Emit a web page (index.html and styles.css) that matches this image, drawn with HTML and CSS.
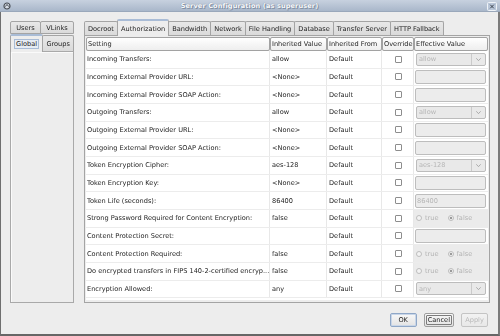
FILE: index.html
```html
<!DOCTYPE html>
<html>
<head>
<meta charset="utf-8">
<link rel="stylesheet" href="styles.css">
</head>
<body>
<div class="window">
  <div class="titlebar">
    <span class="app-icon">
      <svg width="8" height="8" viewBox="0 0 8 8"><circle cx="4" cy="4" r="3" fill="#d7dde6" stroke="#4a4f57" stroke-width="1.2"/><path d="M2.3 4.6 L4 2.4 L5.7 4.6" fill="none" stroke="#4a4f57" stroke-width="1"/></svg>
    </span>
    <span class="title">Server Configuration (as superuser)</span>
    <span class="close">
      <svg width="10" height="9" viewBox="0 0 10 9"><rect x="0.5" y="0.5" width="9" height="8" rx="1" fill="#b9c6d8" stroke="#eef2f7"/><path d="M3.2 2.7 L6.8 6.3 M6.8 2.7 L3.2 6.3" stroke="#3c4450" stroke-width="1"/></svg>
    </span>
  </div>
  <div class="frame">
    <div class="main">
      <div class="left-pane">
        <div class="ltab-row first">
          <div class="tab"><span class="label">Users</span></div>
          <div class="tab"><span class="label">VLinks</span></div>
        </div>
        <div class="ltab-row second">
          <div class="tab selected"><span class="focus label">Global</span></div>
          <div class="tab"><span class="label">Groups</span></div>
        </div>
        <div class="left-content"></div>
      </div>
      <div class="right-pane">
        <div class="rtabs">
          <div class="tab"><span class="label">Docroot</span></div>
          <div class="tab selected"><span class="label">Authorization</span></div>
          <div class="tab"><span class="label">Bandwidth</span></div>
          <div class="tab"><span class="label">Network</span></div>
          <div class="tab"><span class="label">File Handling</span></div>
          <div class="tab"><span class="label">Database</span></div>
          <div class="tab"><span class="label">Transfer Server</span></div>
          <div class="tab"><span class="label">HTTP Fallback</span></div>
        </div>
        <div class="content">
          <div class="thead">
            <div class="th">Setting</div>
            <div class="th">Inherited Value</div>
            <div class="th">Inherited From</div>
            <div class="th">Override</div>
            <div class="th">Effective Value</div>
          </div>
          <div class="tbody">
            <div class="row">
              <div class="cell c-set">Incoming Transfers:</div>
              <div class="cell c-iv">allow</div>
              <div class="cell c-if">Default</div>
              <div class="cell c-ov"><span class="check"></span></div>
              <div class="cell c-ev"><div class="combo"><span class="combo-text">allow</span><span class="combo-arrow"><svg width="5" height="3" viewBox="0 0 5 3"><path d="M0.3 0.3 L2.5 2.6 L4.7 0.3" fill="none" stroke="#9a9a9a" stroke-width="0.8"/></svg></span></div></div>
            </div>
            <div class="row">
              <div class="cell c-set">Incoming External Provider URL:</div>
              <div class="cell c-iv">&lt;None&gt;</div>
              <div class="cell c-if">Default</div>
              <div class="cell c-ov"><span class="check"></span></div>
              <div class="cell c-ev"><div class="field"></div></div>
            </div>
            <div class="row">
              <div class="cell c-set">Incoming External Provider SOAP Action:</div>
              <div class="cell c-iv">&lt;None&gt;</div>
              <div class="cell c-if">Default</div>
              <div class="cell c-ov"><span class="check"></span></div>
              <div class="cell c-ev"><div class="field"></div></div>
            </div>
            <div class="row">
              <div class="cell c-set">Outgoing Transfers:</div>
              <div class="cell c-iv">allow</div>
              <div class="cell c-if">Default</div>
              <div class="cell c-ov"><span class="check"></span></div>
              <div class="cell c-ev"><div class="combo"><span class="combo-text">allow</span><span class="combo-arrow"><svg width="5" height="3" viewBox="0 0 5 3"><path d="M0.3 0.3 L2.5 2.6 L4.7 0.3" fill="none" stroke="#9a9a9a" stroke-width="0.8"/></svg></span></div></div>
            </div>
            <div class="row">
              <div class="cell c-set">Outgoing External Provider URL:</div>
              <div class="cell c-iv">&lt;None&gt;</div>
              <div class="cell c-if">Default</div>
              <div class="cell c-ov"><span class="check"></span></div>
              <div class="cell c-ev"><div class="field"></div></div>
            </div>
            <div class="row">
              <div class="cell c-set">Outgoing External Provider SOAP Action:</div>
              <div class="cell c-iv">&lt;None&gt;</div>
              <div class="cell c-if">Default</div>
              <div class="cell c-ov"><span class="check"></span></div>
              <div class="cell c-ev"><div class="field"></div></div>
            </div>
            <div class="row">
              <div class="cell c-set">Token Encryption Cipher:</div>
              <div class="cell c-iv">aes-128</div>
              <div class="cell c-if">Default</div>
              <div class="cell c-ov"><span class="check"></span></div>
              <div class="cell c-ev"><div class="combo"><span class="combo-text">aes-128</span><span class="combo-arrow"><svg width="5" height="3" viewBox="0 0 5 3"><path d="M0.3 0.3 L2.5 2.6 L4.7 0.3" fill="none" stroke="#9a9a9a" stroke-width="0.8"/></svg></span></div></div>
            </div>
            <div class="row">
              <div class="cell c-set">Token Encryption Key:</div>
              <div class="cell c-iv">&lt;None&gt;</div>
              <div class="cell c-if">Default</div>
              <div class="cell c-ov"><span class="check"></span></div>
              <div class="cell c-ev"><div class="field"></div></div>
            </div>
            <div class="row">
              <div class="cell c-set">Token Life (seconds):</div>
              <div class="cell c-iv">86400</div>
              <div class="cell c-if">Default</div>
              <div class="cell c-ov"><span class="check"></span></div>
              <div class="cell c-ev"><div class="field">86400</div></div>
            </div>
            <div class="row">
              <div class="cell c-set">Strong Password Required for Content Encryption:</div>
              <div class="cell c-iv">false</div>
              <div class="cell c-if">Default</div>
              <div class="cell c-ov"><span class="check"></span></div>
              <div class="cell c-ev radios"><span class="radio"></span><span class="rlabel">true</span><span class="radio on"></span><span class="rlabel">false</span></div>
            </div>
            <div class="row">
              <div class="cell c-set">Content Protection Secret:</div>
              <div class="cell c-iv"></div>
              <div class="cell c-if">Default</div>
              <div class="cell c-ov"><span class="check"></span></div>
              <div class="cell c-ev"><div class="field"></div></div>
            </div>
            <div class="row">
              <div class="cell c-set">Content Protection Required:</div>
              <div class="cell c-iv">false</div>
              <div class="cell c-if">Default</div>
              <div class="cell c-ov"><span class="check"></span></div>
              <div class="cell c-ev radios"><span class="radio"></span><span class="rlabel">true</span><span class="radio on"></span><span class="rlabel">false</span></div>
            </div>
            <div class="row">
              <div class="cell c-set">Do encrypted transfers in FIPS 140-2-certified encryp...</div>
              <div class="cell c-iv">false</div>
              <div class="cell c-if">Default</div>
              <div class="cell c-ov"><span class="check"></span></div>
              <div class="cell c-ev radios"><span class="radio"></span><span class="rlabel">true</span><span class="radio on"></span><span class="rlabel">false</span></div>
            </div>
            <div class="row">
              <div class="cell c-set">Encryption Allowed:</div>
              <div class="cell c-iv">any</div>
              <div class="cell c-if">Default</div>
              <div class="cell c-ov"><span class="check"></span></div>
              <div class="cell c-ev"><div class="combo"><span class="combo-text">any</span><span class="combo-arrow"><svg width="5" height="3" viewBox="0 0 5 3"><path d="M0.3 0.3 L2.5 2.6 L4.7 0.3" fill="none" stroke="#9a9a9a" stroke-width="0.8"/></svg></span></div></div>
            </div>
          </div>
        </div>
      </div>
    </div>
    <div class="buttons">
      <div class="btn default"><span class="label">OK</span></div>
      <div class="btn focused"><span class="btn-focus label">Cancel</span></div>
      <div class="btn disabled"><span class="label">Apply</span></div>
    </div>
  </div>
</div>
</body>
</html>
```

FILE: styles.css
```css
html, body {
  margin: 0;
  padding: 0;
}
body {
  width: 500px;
  height: 336px;
  overflow: hidden;
  font-family: "DejaVu Sans", "Liberation Sans", sans-serif;
  font-size: 6.6px;
  color: #1e1e1e;
  background: #ededed;
}
.window {
  width: 500px;
  height: 336px;
  display: flex;
  flex-direction: column;
}
.titlebar {
  height: 12px;
  flex: none;
  display: flex;
  align-items: center;
  background: linear-gradient(#c7d1df, #a9b7ca);
  border-bottom: 1px solid #9aa8bb;
  box-sizing: border-box;
}
.app-icon {
  width: 12px;
  display: flex;
  justify-content: center;
  padding-left: 1px;
  box-sizing: border-box;
}
.title {
  flex: 1;
  text-align: center;
  font-weight: bold;
  color: #f7f9fc;
  letter-spacing: 0.1px;
  text-shadow: 0 0 1px #6e7a8c, 1px 1px 0 #8593a7;
}
.close {
  width: 13px;
  display: flex;
  align-items: center;
  padding-top: 1px;
}
.frame {
  flex: 1;
  display: flex;
  flex-direction: column;
  border-left: 1px solid #6f6f6f;
  border-right: 2px solid #7b7b7b;
  border-bottom: 2px solid #666;
  padding: 7px 8px 7px 9px;
  background: #ededed;
}
.label {
  filter: grayscale(1);
}
.main {
  height: 284px;
  display: flex;
  gap: 10px;
}
.left-pane {
  width: 64px;
  display: flex;
  flex-direction: column;
}
.tab {
  box-sizing: border-box;
  border: 1px solid #a4a4a4;
  border-bottom: none;
  border-radius: 2px 2px 0 0;
  background: linear-gradient(#e8e8e8, #dadada);
  display: flex;
  align-items: center;
  justify-content: center;
  white-space: nowrap;
  padding: 0 3px;
}
.tab + .tab {
  margin-left: -1px;
}
.tab.selected {
  background: #ededed;
  border-top: 2px solid #a9bcd6;
  position: relative;
  z-index: 1;
}
.ltab-row {
  display: flex;
}
.ltab-row .tab {
  flex: 1 1 auto;
  padding: 0;
}
.ltab-row.first {
  height: 13px;
  margin-top: 2px;
}
.ltab-row.first .tab {
  border-bottom: 1px solid #a4a4a4;
}
.ltab-row.second {
  height: 17px;
  align-items: flex-end;
}
.ltab-row.second .tab {
  height: 16px;
}
.ltab-row.second .tab.selected {
  height: 18px;
  margin-bottom: -1px;
}
.focus {
  border: 1px solid #a9bcd6;
  background: #e6ecf4;
  padding: 0 1px;
  line-height: 8px;
  filter: none;
}
.left-content {
  flex: 1;
  border: 1px solid #a9a9a9;
  box-shadow: inset 1px 1px 0 #fafafa;
  background: #ededed;
}
.right-pane {
  flex: 1;
  display: flex;
  flex-direction: column;
}
.rtabs {
  height: 16px;
  display: flex;
  align-items: flex-end;
}
.rtabs .tab {
  height: 14px;
}
.rtabs .tab.selected {
  height: 17px;
  margin-bottom: -1px;
}
.content {
  flex: 1;
  border: 1px solid #a4a4a4;
  padding: 1px 1px 2px 1px;
  display: flex;
  flex-direction: column;
  background: #ededed;
  filter: grayscale(1);
}
.thead, .row {
  display: grid;
  grid-template-columns: 184px 57px 55px 32px 1fr;
}
.thead {
  height: 14px;
  flex: none;
}
.th {
  box-sizing: border-box;
  border: 1px solid #a2a2a2;
  border-radius: 2px;
  background: linear-gradient(#ffffff, #eeeeee);
  padding-left: 1px;
  display: flex;
  align-items: center;
  white-space: nowrap;
  overflow: hidden;
}
.tbody {
  flex: 1;
  background: #ffffff;
}
.row {
  height: 17.67px;
  box-sizing: border-box;
  border-bottom: 1px solid #ececec;
}
.cell {
  display: flex;
  align-items: center;
  white-space: nowrap;
  overflow: hidden;
  border-right: 1px solid #e8e8e8;
}
.c-set {
  padding-left: 1px;
}
.c-iv, .c-if {
  padding-left: 2px;
}
.c-ov {
  justify-content: center;
  padding-left: 2px;
}
.c-ev {
  border-right: none;
  padding: 0 2px 0 1px;
}
.check {
  width: 7px;
  height: 7px;
  box-sizing: border-box;
  border: 1px solid #8d8d8d;
  border-radius: 1px;
  background: #fff;
}
.combo {
  flex: 1;
  height: 13px;
  margin-left: 1px;
  box-sizing: border-box;
  border: 1px solid #bcbcbc;
  border-radius: 2px;
  background: #e9e9e9;
  display: flex;
  color: #b6b6b6;
}
.combo-text {
  flex: 1;
  padding-left: 2px;
  display: flex;
  align-items: center;
}
.combo-arrow {
  width: 13px;
  border-left: 1px solid #cacaca;
  display: flex;
  align-items: center;
  justify-content: center;
}
.field {
  flex: 1;
  height: 14px;
  box-sizing: border-box;
  border: 1px solid #bdbdbd;
  border-radius: 2px;
  background: #ececec;
  color: #b6b6b6;
  display: flex;
  align-items: center;
  padding-left: 1px;
}
.radios {
  background: #ebebeb;
  color: #b3b3b3;
  padding-left: 2px;
}
.radio {
  width: 6px;
  height: 6px;
  box-sizing: border-box;
  border: 1px solid #bdbdbd;
  border-radius: 50%;
  background: #f3f3f3;
  margin-right: 3px;
}
.radio.on {
  margin-left: 9px;
  background: radial-gradient(circle, #9a9a9a 0 1.3px, #f3f3f3 1.6px);
}
.buttons {
  height: 14px;
  margin-top: 10px;
  margin-right: 2px;
  display: flex;
  justify-content: flex-end;
  gap: 7px;
}
.btn {
  min-width: 27px;
  box-sizing: border-box;
  border: 1px solid #9e9e9e;
  border-radius: 2px;
  background: linear-gradient(#f8f8f8, #e3e3e3);
  padding: 0 2px;
  display: flex;
  align-items: center;
  justify-content: center;
}
.btn.default {
  border-color: #8fa7c7;
  box-shadow: inset 0 0 0 1px #c9d6e8;
}
.btn.focused {
  padding: 1px;
}
.btn-focus {
  border: 1px solid #7c7c7c;
  border-radius: 1px;
  padding: 0 1px;
  height: 100%;
  box-sizing: border-box;
  display: flex;
  align-items: center;
}
.btn.disabled {
  color: #b8b8b8;
  border-color: #c4c4c4;
  background: linear-gradient(#f2f2f2, #e8e8e8);
}
```
